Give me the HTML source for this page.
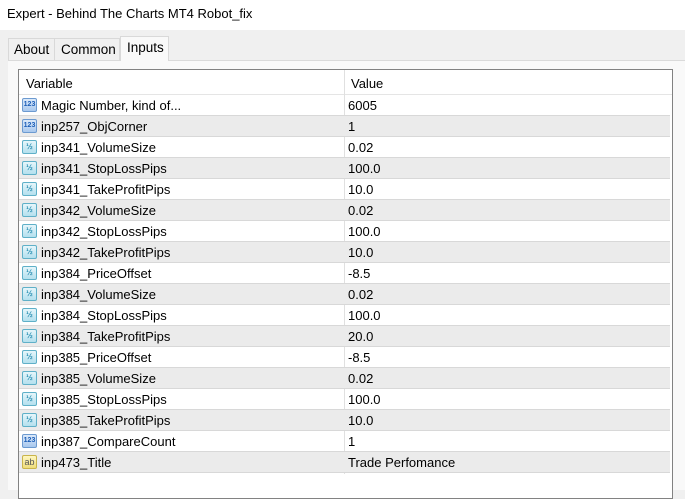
<!DOCTYPE html>
<html><head><meta charset="utf-8"><style>
*{margin:0;padding:0;box-sizing:border-box}
body{width:685px;height:490px;background:#f0f0f0;font-family:"Liberation Sans","DejaVu Sans",sans-serif;font-size:13px;color:#000;position:relative;overflow:hidden}
.title{position:absolute;left:0;top:0;width:685px;height:30px;background:#fff;padding:6px 0 0 7px;font-size:13px}
.tab{position:absolute;top:38px;height:23px;font-size:13.5px;padding-top:3px}
.panel{position:absolute;left:8px;top:60px;width:677px;height:430px;background:#f9f9f9;border-top:1px solid #dadada}
.list{position:absolute;left:18px;top:69px;width:655px;height:430px;background:#fff;border:1px solid #828282}
.hdr{position:absolute;left:0;top:0;width:653px;height:25px;border-bottom:1px solid #e5e5e5}
.row{position:absolute;left:0;width:651px;height:21px;border-bottom:1px solid #d8d8d8}
.row.g{background:#ebebeb}
.v{position:absolute;left:22px;top:3px}
.val{position:absolute;left:329px;top:3px}
.col{position:absolute;left:325px;top:0;width:1px;height:404px;background:#e0e0e0}
.ic{position:absolute;left:3px;top:3px;width:15px;height:14px;border:1px solid #6c9ad0;border-radius:2px;background:linear-gradient(#dbe9fa,#a9c8ee);font-size:7px;font-weight:bold;color:#1d5fb8;text-align:center;line-height:12px}
.ic.d{border-color:#5fb0c8;background:linear-gradient(#e6f6fb,#b4e0ee);color:#2a8fb2;font-size:8px}
.ic.s{border-color:#c9b44a;background:linear-gradient(#fff7c0,#eedc7a);color:#555;font-size:9px;font-weight:normal}
</style></head><body>
<div class="title">Expert - Behind The Charts MT4 Robot_fix</div>
<div class="panel"></div>
<div class="tab" style="left:8px;width:47px;border:1px solid #d9d9d9;border-bottom:none;padding-left:5px">About</div>
<div class="tab" style="left:55px;width:65px;border:1px solid #d9d9d9;border-left:none;border-bottom:none;padding-left:6px">Common</div>
<div class="tab" style="left:120px;top:36px;height:25px;width:49px;background:#f9f9f9;border:1px solid #d9d9d9;border-bottom:none;padding-left:6px">Inputs</div>
<div class="list">
<div class="hdr"><span style="position:absolute;left:7px;top:6px">Variable</span><span style="position:absolute;left:332px;top:6px">Value</span></div>
<div class="col"></div>
<div class="row" style="top:25px"><div class="ic">123</div><span class="v">Magic Number, kind of...</span><span class="val">6005</span></div>
<div class="row g" style="top:46px"><div class="ic">123</div><span class="v">inp257_ObjCorner</span><span class="val">1</span></div>
<div class="row" style="top:67px"><div class="ic d">½</div><span class="v">inp341_VolumeSize</span><span class="val">0.02</span></div>
<div class="row g" style="top:88px"><div class="ic d">½</div><span class="v">inp341_StopLossPips</span><span class="val">100.0</span></div>
<div class="row" style="top:109px"><div class="ic d">½</div><span class="v">inp341_TakeProfitPips</span><span class="val">10.0</span></div>
<div class="row g" style="top:130px"><div class="ic d">½</div><span class="v">inp342_VolumeSize</span><span class="val">0.02</span></div>
<div class="row" style="top:151px"><div class="ic d">½</div><span class="v">inp342_StopLossPips</span><span class="val">100.0</span></div>
<div class="row g" style="top:172px"><div class="ic d">½</div><span class="v">inp342_TakeProfitPips</span><span class="val">10.0</span></div>
<div class="row" style="top:193px"><div class="ic d">½</div><span class="v">inp384_PriceOffset</span><span class="val">-8.5</span></div>
<div class="row g" style="top:214px"><div class="ic d">½</div><span class="v">inp384_VolumeSize</span><span class="val">0.02</span></div>
<div class="row" style="top:235px"><div class="ic d">½</div><span class="v">inp384_StopLossPips</span><span class="val">100.0</span></div>
<div class="row g" style="top:256px"><div class="ic d">½</div><span class="v">inp384_TakeProfitPips</span><span class="val">20.0</span></div>
<div class="row" style="top:277px"><div class="ic d">½</div><span class="v">inp385_PriceOffset</span><span class="val">-8.5</span></div>
<div class="row g" style="top:298px"><div class="ic d">½</div><span class="v">inp385_VolumeSize</span><span class="val">0.02</span></div>
<div class="row" style="top:319px"><div class="ic d">½</div><span class="v">inp385_StopLossPips</span><span class="val">100.0</span></div>
<div class="row g" style="top:340px"><div class="ic d">½</div><span class="v">inp385_TakeProfitPips</span><span class="val">10.0</span></div>
<div class="row" style="top:361px"><div class="ic">123</div><span class="v">inp387_CompareCount</span><span class="val">1</span></div>
<div class="row g" style="top:382px"><div class="ic s">ab</div><span class="v">inp473_Title</span><span class="val">Trade Perfomance</span></div>
</div>
</body></html>
